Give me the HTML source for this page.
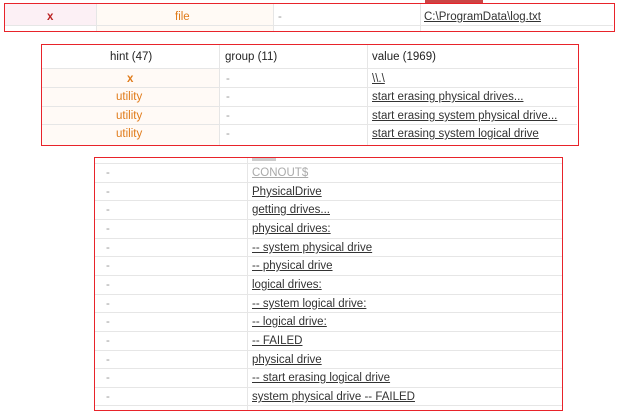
<!DOCTYPE html>
<html><head><style>
body{margin:0;width:620px;height:420px;background:#fff;position:relative;overflow:hidden;font-family:"Liberation Sans",sans-serif;font-size:11.5px;color:#333}
.a{position:absolute}
.box{position:absolute;border:1.5px solid #e8232a;box-sizing:border-box}
.t{position:absolute;white-space:nowrap;line-height:14px}
.u{text-decoration:underline;color:#333}
.hl{position:absolute;height:1px;background:#e6e6e6}
.vl{position:absolute;width:1px;background:#e6e6e6}
.or{color:#e07b1a}
.d{color:#999}
</style></head><body>
<!-- box1 -->
<div class="a" style="top:4px;left:5px;width:91px;height:21px;background:#fcf0f5"></div>
<div class="a" style="top:4px;left:96px;width:177px;height:27px;background:#fffaf5"></div>
<div class="hl" style="left:5px;top:25px;width:608px"></div>
<div class="vl" style="left:96px;top:4px;height:27px"></div>
<div class="vl" style="left:273px;top:4px;height:27px"></div>
<div class="vl" style="left:420px;top:4px;height:27px"></div>
<div class="a" style="left:425px;top:0px;width:58px;height:3px;background:#c44"></div>
<div class="t" style="left:47px;top:10px;color:#b22;font-weight:bold">x</div>
<div class="t or" style="left:175px;top:10px">file</div>
<div class="t d" style="left:278px;top:10px">-</div>
<div class="t u" style="left:424px;top:10px">C:\ProgramData\log.txt</div>
<div class="box" style="left:4px;top:3px;width:611px;height:29px"></div>

<!-- box2 -->
<div class="a" style="left:42px;top:68px;width:177px;height:77px;background:#fffaf6"></div>
<div class="hl" style="left:42px;top:68px;width:535px"></div>
<div class="hl" style="left:42px;top:87px;width:535px"></div>
<div class="hl" style="left:42px;top:106px;width:535px"></div>
<div class="hl" style="left:42px;top:124px;width:535px"></div>
<div class="vl" style="left:219px;top:45px;height:100px"></div>
<div class="vl" style="left:367px;top:45px;height:100px"></div>
<div class="t" style="left:110px;top:50px;color:#222">hint (47)</div>
<div class="t" style="left:225px;top:50px;color:#222">group (11)</div>
<div class="t" style="left:372px;top:50px;color:#222">value (1969)</div>
<div class="t or" style="left:127px;top:72px;font-weight:bold">x</div>
<div class="t or" style="left:116px;top:90px">utility</div>
<div class="t or" style="left:116px;top:109px">utility</div>
<div class="t or" style="left:116px;top:127px">utility</div>
<div class="t d" style="left:226px;top:72px">-</div>
<div class="t d" style="left:226px;top:90px">-</div>
<div class="t d" style="left:226px;top:109px">-</div>
<div class="t d" style="left:226px;top:127px">-</div>
<div class="t u" style="left:372px;top:72px">\\.\</div>
<div class="t u" style="left:372px;top:90px">start erasing physical drives...</div>
<div class="t u" style="left:372px;top:109px">start erasing system physical drive...</div>
<div class="t u" style="left:372px;top:127px">start erasing system logical drive </div>
<div class="box" style="left:41px;top:44px;width:538px;height:102px"></div>

<!-- box3 -->
<div class="vl" style="left:247px;top:158px;height:252px"></div>
<div class="a" style="left:252px;top:158px;width:24px;height:3px;background:#ccc"></div>
<div id="b3"></div>
<div class="box" style="left:94px;top:157px;width:469px;height:254px"></div>
<script>
var v=["CONOUT$","PhysicalDrive","getting drives...","physical drives:","-- system physical drive ","-- physical drive ","logical drives:","-- system logical drive: ","-- logical drive: ","-- FAILED","physical drive ","-- start erasing logical drive ","system physical drive -- FAILED"];
var h="";
for(var i=0;i<v.length;i++){var y=163+i*18.65;
h+='<div class="hl" style="left:95px;top:'+Math.round(y)+'px;width:467px"></div>';
h+='<div class="t d" style="left:106px;top:'+Math.round(y+3)+'px">-</div>';
h+='<div class="t u" style="left:252px;top:'+Math.round(y+3)+'px'+(i==0?';color:#aaa':'')+'">'+v[i]+'</div>';}
h+='<div class="hl" style="left:95px;top:405px;width:467px"></div>';
document.getElementById("b3").innerHTML=h;
</script>
</body></html>
